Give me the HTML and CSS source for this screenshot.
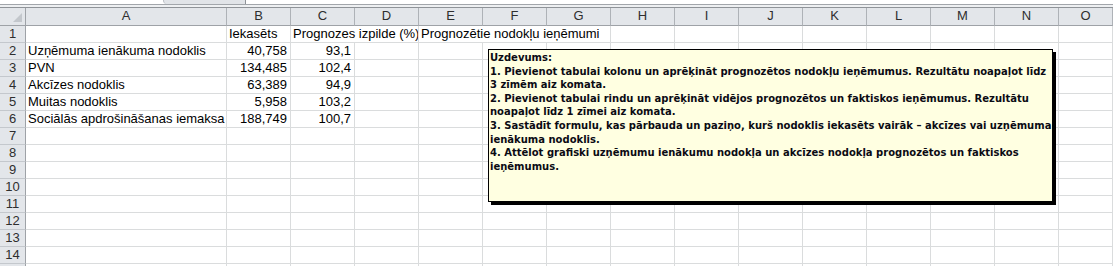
FILE: index.html
```html
<!DOCTYPE html>
<html lang="lv">
<head>
  <meta charset="UTF-8">
  <meta name="viewport" content="width=device-width, initial-scale=1.0">
  <title>Nodokļi</title>
  <link rel="stylesheet" href="styles.css">
</head>
<body>
  <div class="formula-bar">
    <div class="formula-gap"></div>
    <div class="formula-grip"></div>
  </div>
  <div class="formula-edge"></div>

  <div class="sheet" id="sheet"></div>

  <div class="note">
    <p>Uzdevums:</p>
    <p>1. Pievienot tabulai kolonu un aprēķināt prognozētos nodokļu ieņēmumus. Rezultātu noapaļot līdz<br>3 zīmēm aiz komata.</p>
    <p>2. Pievienot tabulai rindu un aprēķināt vidējos prognozētos un faktiskos ieņēmumus. Rezultātu<br>noapaļot līdz 1 zīmei aiz komata.</p>
    <p>3. Sastādīt formulu, kas pārbauda un paziņo, kurš nodoklis iekasēts vairāk – akcīzes vai uzņēmuma<br>ienākuma nodoklis.</p>
    <p>4. Attēlot grafiski uzņēmumu ienākumu nodokļa un akcīzes nodokļa prognozētos un faktiskos<br>ieņēmumus.</p>
  </div>

  <script>
    // kolonnas un šūnu saturs
    const cols = 'ABCDEFGHIJKLMNO'.split('');
    const rowCount = 14;
    const data = {
      1: { B: ['Iekasēts'], C: ['Prognozes izpilde (%)', 2], E: ['Prognozētie nodokļu ieņēmumi', 3] },
      2: { A: ['Uzņēmuma ienākuma nodoklis'], B: ['40,758', 1, true], C: ['93,1', 1, true] },
      3: { A: ['PVN'], B: ['134,485', 1, true], C: ['102,4', 1, true] },
      4: { A: ['Akcīzes nodoklis'], B: ['63,389', 1, true], C: ['94,9', 1, true] },
      5: { A: ['Muitas nodoklis'], B: ['5,958', 1, true], C: ['103,2', 1, true] },
      6: { A: ['Sociālās apdrošināšanas iemaksa'], B: ['188,749', 1, true], C: ['100,7', 1, true] }
    };

    const sheet = document.getElementById('sheet');

    function addCell(className, text) {
      const cell = document.createElement('div');
      cell.className = className;
      cell.textContent = text || '';
      sheet.appendChild(cell);
      return cell;
    }

    // galvenes rinda
    addCell('corner');
    cols.forEach(c => addCell('col-head', c));

    // rindas (pēdējā rinda tikai daļēji redzama, bez numura)
    for (let r = 1; r <= rowCount + 1; r++) {
      addCell('row-head', r <= rowCount ? r : '');
      const row = data[r] || {};
      let i = 0;
      while (i < cols.length) {
        const entry = row[cols[i]];
        const span = entry && entry[1] ? entry[1] : 1;
        let cls = 'cell';
        if (span > 1) cls += ' span-' + span;
        if (entry && entry[2]) cls += ' num';
        addCell(cls, entry ? entry[0] : '');
        i += span;
      }
    }
  </script>
</body>
</html>
```

FILE: styles.css
```css
body {
  margin: 0;
  background: #fff;
  font-family: "Liberation Sans", Arial, sans-serif;
  font-size: 13px;
  color: #000;
  overflow: hidden;
}

.formula-bar {
  display: flex;
  height: 4px;
}

.formula-gap {
  width: 163px;
}

.formula-grip {
  width: 81px;
  background: #e1e4e8;
  border-left: 1px solid #b9bdc2;
  border-right: 1px solid #8e9297;
  border-bottom-left-radius: 12px;
}

.formula-edge {
  height: 2px;
  background: #eef0f2;
  border-top: 1px solid #a2a6ab;
  border-bottom: 1px solid #8f9398;
}

.sheet {
  display: grid;
  grid-template-columns: 26px 201px repeat(13, 64px) 1fr;
  grid-template-rows: 18px;
  grid-auto-rows: 17px;
}

.sheet > div {
  box-sizing: border-box;
  line-height: 16px;
  white-space: nowrap;
  overflow: hidden;
}

.corner,
.col-head,
.row-head {
  background: #e3e6ea;
  color: #2e2e2e;
  text-align: center;
}

.corner {
  display: flex;
  justify-content: flex-end;
  align-items: flex-end;
  padding: 0 3px 3px 0;
  border-right: 1px solid #9ea2a7;
  border-bottom: 1px solid #9ea2a7;
}

.corner::after {
  content: "";
  width: 0;
  height: 0;
  border-left: 9px solid transparent;
  border-bottom: 9px solid #c3c7cc;
}

.col-head {
  border-right: 1px solid #aeb2b7;
  border-bottom: 1px solid #9ea2a7;
}

.row-head {
  border-right: 1px solid #9ea2a7;
  border-bottom: 1px solid #c4c8cd;
}

.cell {
  padding: 0 2px;
  border-right: 1px solid #dadcdd;
  border-bottom: 1px solid #dadcdd;
}

.num {
  text-align: right;
  padding-right: 3px;
}

.span-2 {
  grid-column: span 2;
}

.span-3 {
  grid-column: span 3;
}

.note {
  position: absolute;
  left: 488px;
  top: 49px;
  width: 565px;
  height: 153px;
  box-sizing: border-box;
  padding: 1px 1px;
  background: #ffffe1;
  border: 1px solid #000;
  box-shadow: 3px 3px 0 #000;
  font-family: "DejaVu Sans", sans-serif;
  font-weight: bold;
  font-size: 10px;
  line-height: 13.6px;
  color: #0b0b14;
  white-space: nowrap;
}

.note p {
  margin: 0;
}
```
